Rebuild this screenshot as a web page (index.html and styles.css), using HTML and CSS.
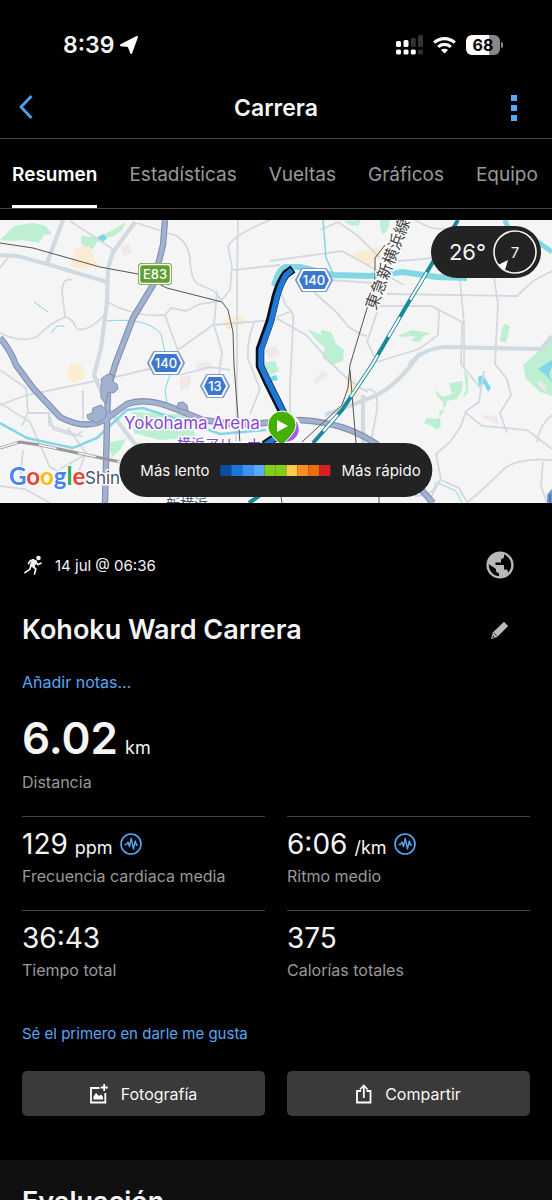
FILE: index.html
```
<!DOCTYPE html>
<html lang="es">
<head>
  <meta charset="UTF-8">
  <meta name="viewport" content="width=device-width, initial-scale=1.0">
  <title>Carrera</title>
  <link rel="stylesheet" href="styles.css">
</head>
<body>
  <!-- Status bar -->
  <div class="status-bar">
    <div class="status-time">
      <span>8:39</span>
      <svg width="18" height="18" viewBox="0 0 18 18"><path d="M17 1 11.200 17 8.500 10 1 9.200Z" fill="#fff" stroke="#fff" stroke-width="2" stroke-linejoin="round"/></svg>
    </div>
    <div class="status-icons">
      <svg width="27" height="20" viewBox="0 0 27 20">
        <g fill="#fff">
          <rect x="0" y="6" width="5" height="6" rx="1.5"/><rect x="7.500" y="5" width="5" height="7" rx="1.5"/>
          <rect x="0" y="14.500" width="5" height="5" rx="1.5"/><rect x="7.500" y="14.500" width="5" height="5" rx="1.5"/><rect x="14.800" y="14.500" width="5" height="5" rx="1.5"/>
        </g>
        <g fill="#333"><rect x="14.800" y="3" width="5" height="9" rx="1.5"/><rect x="22" y="0" width="5" height="12" rx="1.5"/><rect x="22" y="14.500" width="5" height="5" rx="1.5"/></g>
      </svg>
      <svg width="23" height="18" viewBox="0 0 23 18" fill="none" stroke="#fff" stroke-width="3.200">
        <path d="M1.200 6.700a14.800 14.800 0 0 1 20.600 0"/><path d="M5.200 10.900a9 9 0 0 1 12.600 0"/><path d="M11.500 17.600 8 14.100a5 5 0 0 1 7 0Z" fill="#fff" stroke="none"/>
      </svg>
      <div class="battery"><span>68</span></div>
    </div>
  </div>

  <!-- Header -->
  <header class="header">
    <button class="icon-button" aria-label="Atrás">
      <svg width="14" height="25" viewBox="0 0 14 25"><path d="M12.500 1 2 12l10.500 11" fill="none" stroke="#4d9ff0" stroke-width="2.800"/></svg>
    </button>
    <h1>Carrera</h1>
    <button class="icon-button menu-button" aria-label="Más opciones">
      <svg width="6" height="26" viewBox="0 0 6 26" fill="#57a7fb"><path d="M0 0h6v6H0zM0 10h6v6H0zM0 20h6v6H0z"/></svg>
    </button>
  </header>

  <nav class="tabs">
    <a href="#resumen" class="active">Resumen</a>
    <a href="#estadisticas">Estadísticas</a>
    <a href="#vueltas">Vueltas</a>
    <a href="#graficos">Gráficos</a>
    <a href="#equipo">Equipo</a>
  </nav>

  <!-- Map -->
  <section class="map">
    <svg class="map-canvas" viewBox="0 0 552 283">
      <rect width="552" height="283" fill="#f5f5f5"/>
      <!-- parks -->
      <g fill="#bdf0d2">
        <path d="M0 20 14 6l18-3 14 3 6 8-8 1-5 8-17-3-9 1Z"/>
        <path d="M81 16l16 1 12-5 17-10-4 8-8 6-15 4-8 11-10-7Z"/>
        <path d="M343 1l18-1-3 6-8-1ZM380 0h10l-2 9-5 6-3-8Z"/>
        <path d="M307 109l15 6-2-5 11 2 5 12 8 6-1 11-12 4-9-8 3-9-8-7Z"/>
        <path d="M399 115l13-5 18 3-6 3-5 6-8-1 4-5-15 1Z"/>
        <path d="M504 104l6 2-4 17-6-2 2-12Z"/>
        <path d="M523 145l29-26v57l-12-4-14-13Z"/>
        <path d="M435 170l8 7 9-3-3-11 14-2-1 9-5 9-10 2-3 8-5 3 2 13-3 5-8-5-6-2 3-5 11 1 6-8-1-9-6-6Z"/>
        <path d="M464 150l4 6v17l-5 4 3-8Z"/>
        <path d="M132 192l56 3 8 22-36 3-26-7Z"/>
        <path d="M110 222l16-3-6 11-8 7-2-7ZM262 143l13-2 4 10-10 5Z"/>
      </g>
      <g fill="#7fd6e8"><path d="M97 18l6-4 4 4-4 4ZM478 157l5-2 8 13-3 4-4-8-5 2ZM538 149l14-9v6l-3 8 3 8-6-7ZM267 158l9-3 2 5-9 2Z"/></g>
      <!-- built up blocks -->
      <g fill="#fbecd2"><path d="M76 28l14-2 8 20-18 4-10-4ZM70 143l12 2 3 13-12 5-6-8ZM353 34l22-7 10 3-15 15-16-5ZM344 155l13 5 4 14-12 8ZM223 100l18-5 6 7-20 8Z"/></g>
      <g fill="#f0e8e9"><path d="M120 27l9-3 3 9-8 3ZM196 143l14-1 2 7-14 3ZM180 158l12-4-3 14-9 3ZM313 161l10-11 5 5-12 9ZM537 161l8 3 2 9-10-9ZM481 195l16 1 1 8-13-5ZM264 130l12-5 3 10-10 4Z"/></g>
      <!-- minor roads -->
      <g fill="none" stroke="#d3d9e1" stroke-width="1.800">
        <path d="M0 113q24 11 38 3 12-13 27-19 7 1 12 12 12 3 27-14"/>
        <path d="M65 97l-3-26q1-14 10-11M0 48l10-13"/>
        <path d="M70 1l17 11 27 18M107 82q30 16 58 13l6-7 15 3 14-7 21-3 9-11 2-23-4-20q4-12 47-29"/>
        <path d="M137 3l40 13q12 8 13 24 1 20 8 24l16 7 7 9"/>
        <path d="M233 50l47-5M238 0l-1 60 0 80-1 83M217 71l-3 34 8 27-3 23 4 22"/>
        <path d="M178 130l35-25 61-5M165 95l13 36M255 101q-8 17-7 38l12 30-10 25"/>
        <path d="M174 143l-50 12-97 20L0 185M0 150l26 18 2 24-6 14M27 193h22l4 16 22 7 8-5M49 195v10l34 12M83 170l0 29"/>
        <path d="M0 183l30 19 20 45 17 9M68 208l18 25-7 18M180 155l30-8 20 3"/>
        <path d="M270 41l72-10 62 34M320 10l18-8 20 14 34 34M387 42l47-4M415 0q20 12 30 8"/>
        <path d="M276 59l10 27q9 5 7 20l-3 60v40M277 97l15-6M276 98l30 17 32 35q20 18 30 22"/>
        <path d="M314 72l22 20 13 15q13 9 18 9M330 60l45 3M387 74l130 2 16-15 19-10M380 86l51 0 31 16-1 42 20 25"/>
        <path d="M460 59l4 45 0 45M494 57l4 27-3 60 12 15 4 16-11 18 7 20M439 91l-1 24-19 14-42 13-10-20 12-36"/>
        <path d="M495 58l4-20 20-4 20 6"/>
        <path d="M484 151l-5 31-13 9-5 15-11 16-14 12 5 26 18 8 14 25"/>
        <path d="M465 192l17 14 45 4 25 19M537 222q2-16 15-27M552 240q-40-3-52 13l-18 17-15 13M543 242l-2 24 6 17"/>
        <path d="M0 266l25 3 25 14M23 230l-3 30M60 249l25-14M365 170q14-4 12 20l-6 32"/>
        <path d="M415 276q20 0 21-14M440 260l-12 23"/>
      </g>
      <!-- main roads -->
      <g fill="none" stroke="#d2dae1" stroke-width="4.200">
        <path d="M0 35l17 1 30 8 60 18M63 0L47 43"/>
        <path d="M135 2l-22 30-5 16-1 34-6 46-7 27 13 30"/>
        <path d="M409 145q14-17 37-18l95 2 11-13M420 133q-22 32-45 43l-50 19M363 175v48M109 190l26 34 22 4"/>
      </g>
      <!-- water -->
      <g fill="none" stroke="#82d7e5">
        <path d="M274 66q5-18 12-19l14 0 33 8 37 1 33-4 34 5 30 1" stroke-width="6"/>
        <path d="M505 0q5 18 30 20l17 12" stroke-width="5"/>
        <path d="M323 0l3 38 8 17" stroke-width="1.500"/>
        <path d="M0 203l27 15 46 10 24-10 30-28 16-2 37 12 40 14 46-4" stroke-width="2.500"/>
        <path d="M34 82l14 10M51 113l6-7h7M107 101q40-4 54 13l5 23 7 8-8 25 2 14M438 263l18 8 6 12" stroke-width="1"/>
      </g>
      <!-- expressways -->
      <g fill="none" stroke-linejoin="round">
        <g stroke="#8191b0" stroke-width="6.400">
          <path d="M165 0l-2 25-10 40-20 33-18 47-7 24-1 34-2 80"/>
          <path d="M0 118q10 11 16 27l17 23 27 29q28 15 49 0l18-13q19-7 46 4l30 12 35 5 62-5q58 3 93 38l40 45"/>
        </g>
        <g stroke="#a2b1d0" stroke-width="4.200">
          <path d="M165 0l-2 25-10 40-20 33-18 47-7 24-1 34-2 80"/>
          <path d="M0 118q10 11 16 27l17 23 27 29q28 15 49 0l18-13q19-7 46 4l30 12 35 5 62-5q58 3 93 38l40 45"/>
        </g>
        <!-- junctions -->
        <g fill="#a2b1d0" stroke="#8191b0" stroke-width="1">
          <path d="M101 166l1-8 6-4 5 1v7l4 2 1 5-4 4-6-1-2 12-5-6Z"/>
          <path d="M88 199l-1-4 5-2 1-5 8-3 6 6-2 7-8 5Z"/>
          <path d="M177 188l1-5 5-1 4 3 1 6Z"/>
        </g>
      </g>
      <!-- railways -->
      <g fill="none" stroke="#555" stroke-width="1">
        <path d="M0 23l33 5 67 19 38 7 29 14 55 14 6 8 5 22 1 33 6 78M385 25l-10 13v20l-7 27-18 60-2 23-6 17-40 37M350 150l6 73M280 270l2 13M379 277v6"/>
      </g>
      <path d="M0 228l20-6 20 3 80 17" fill="none" stroke="#999" stroke-width="3"/>
      <path d="M0 228l20-6 20 3 80 17" fill="none" stroke="#f5f5f5" stroke-width="1.600" stroke-dasharray="18 22"/>
      <path d="M458 0l-28 47-23 38-35 60-30 45-29 33" fill="none" stroke="#17899a" stroke-width="4"/>
      <path d="M458 0l-28 47-23 38-35 60-30 45-29 33" fill="none" stroke="#fff" stroke-width="2.200" stroke-dasharray="0 61 32 20 23 21 50 22 22 60"/>
      <path d="M249 283l14-10" stroke="#17899a" stroke-width="4"/>
      <!-- run route -->
      <path d="M293 49l-7 5q-6 8-10 22l-6 25-10 28v17l7 15 17 34-8 22-12 8" fill="none" stroke="#06101f" stroke-width="8.500" stroke-linejoin="round"/>
      <path d="M292 50l-6 5q-5 8-9 22l-6 25-10 28v16l7 15 17 34-8 22-12 8" fill="none" stroke="#1d78d8" stroke-width="5.500" stroke-linejoin="round"/>

      <!-- map labels -->
      <text class="map-label rail-label" text-anchor="middle" transform="translate(393 46) rotate(-69)">東急新横浜線</text>
      <text class="map-label place-label" x="124" y="209">Yokohama Arena</text>
      <text class="map-label place-label-jp" x="177" y="229">横浜アリーナ</text>
      <text class="map-label city-label" x="85" y="264">Shin</text>
      <text class="map-label city-label-jp" x="166" y="289">新横浜</text>
      <text class="google-logo" x="9" y="265"><tspan fill="#4285f4">G</tspan><tspan fill="#ea4335">o</tspan><tspan fill="#fbbc05">o</tspan><tspan fill="#4285f4">g</tspan><tspan fill="#34a853">l</tspan><tspan fill="#ea4335">e</tspan></text>

      <!-- road shields -->
      <rect x="138" y="43" width="34" height="22" rx="4" fill="#5f9d35"/>
      <rect x="139.500" y="44.500" width="31" height="19" rx="3" fill="#5f9d35" stroke="#fff" stroke-width="1.500"/>
      <text class="shield-label" x="155" y="59">E83</text>
      <g fill="#3c78cf" stroke-linejoin="round">
        <path d="M302 49h24l6 11-6 11h-24l-6-11Z" stroke="#7d9ccb" stroke-width="2"/>
        <path d="M303 50h22l5 10-5 10h-22l-5-10Z" stroke="#fff" stroke-width="1.800"/>
        <path d="M154 132h24l6 11-6 11h-24l-6-11Z" stroke="#7d9ccb" stroke-width="2"/>
        <path d="M155 133h22l5 10-5 10h-22l-5-10Z" stroke="#fff" stroke-width="1.800"/>
        <path d="M207 155h16l6 11-6 11h-16l-6-11Z" stroke="#7d9ccb" stroke-width="2"/>
        <path d="M208 156h14l5 10-5 10h-14l-5-10Z" stroke="#fff" stroke-width="1.800"/>
        <path d="M548 275l4-5v13h-4Z" stroke="#7d9ccb" stroke-width="2"/>
      </g>
      <text class="shield-label" x="314" y="65">140</text>
      <text class="shield-label" x="166" y="148">140</text>
      <text class="shield-label" x="215" y="171">13</text>

      <!-- start pin -->
      <circle cx="286" cy="209" r="14" fill="#a259ee" stroke="#fff" stroke-width="2.500"/>
      <path d="M282 226q-4-4-9-9-6-6-5-12a14 14 0 0 1 28 0q0 6-6 12-5 5-8 9Z" fill="#45b000" stroke="#fff"/>
      <path d="M277 200v12l11-6Z" fill="#fff"/>
    </svg>

    <div class="weather">
      <span>26°</span>
      <svg width="44" height="44" viewBox="0 0 44 44">
        <circle cx="22" cy="22" r="21" fill="none" stroke="#f2f2f2" stroke-width="1.600"/>
        <path d="M5 35 15 30 12 40Z" fill="#fff"/>
        <text class="wind" x="22" y="28">7</text>
      </svg>
    </div>

    <div class="legend">
      <span>Más lento</span>
      <div class="pace-scale"><i></i><i></i><i></i><i></i><i></i><i></i><i></i><i></i><i></i><i></i></div>
      <span>Más rápido</span>
    </div>
  </section>

  <!-- Activity summary -->
  <main class="summary" id="resumen">
    <div class="meta">
      <svg width="22" height="22" viewBox="0 0 22 22">
        <circle cx="16.500" cy="4" r="2.300" fill="#f2f2f2"/>
        <path d="M11 12.500l2.800 2.500-1.300 5M8.800 12.500 7.500 15.600 3 18.500M11.500 6.200 8.500 6.500 6.500 9.500M14 8l1.800 2.600 3.200-1.400" fill="none" stroke="#f2f2f2" stroke-width="1.700" stroke-linejoin="round" stroke-linecap="round"/>
        <path d="M10.500 5.200 14.800 7 12 13 8 12.200Z" fill="#f2f2f2" stroke="#f2f2f2" stroke-linejoin="round"/>
      </svg>
      <span>14 jul @ 06:36</span>
      <button class="icon-button privacy-button" aria-label="Privacidad">
        <svg width="28" height="28" viewBox="0 0 28 28">
          <circle cx="14" cy="14" r="12.400" fill="#000" stroke="#b9b9b9" stroke-width="2.400"/>
          <path d="M2 12.500 4 7l6-5 8 0v4.500l-3 2v3H9.500V14H18v4.500h3L22.500 22 17 26.500 13 27v-4.500l-3-2V18Z" fill="#b9b9b9"/>
        </svg>
      </button>
    </div>

    <div class="title-row">
      <h2>Kohoku Ward Carrera</h2>
      <button class="icon-button" aria-label="Editar">
        <svg width="18" height="18" viewBox="0 0 18 18"><path d="M0 18 1.800 11.500 13 .8 17.200 5 6.200 16Z" fill="#b9b9b9"/><path d="M2 14.500 3.500 16l-2 .8Z" fill="#000"/><path d="M2.600 11.800 6 15.200" stroke="#333"/></svg>
      </button>
    </div>
    <a href="#notas" class="notes-link">Añadir notas...</a>

    <div class="distance">
      <div class="value"><strong>6.02</strong> <small>km</small></div>
      <div class="label">Distancia</div>
    </div>

    <div class="stats">
      <div class="stat">
        <div class="value">129 <small>ppm</small>
          <svg width="22" height="22" viewBox="0 0 22 22" fill="none" stroke="#58a6f5"><circle cx="11" cy="11" r="10" stroke-width="1.600"/><path d="M4.500 11.500h2L8 9l1.500 4.500L11.200 5.500l2.300 10.500L15.300 8l1.200 4h1.500" stroke-width="1.400" stroke-linejoin="round"/></svg>
        </div>
        <div class="label">Frecuencia cardiaca media</div>
      </div>
      <div class="stat">
        <div class="value">6:06 <small>/km</small>
          <svg width="22" height="22" viewBox="0 0 22 22" fill="none" stroke="#58a6f5"><circle cx="11" cy="11" r="10" stroke-width="1.600"/><path d="M4.500 11.500h2L8 9l1.500 4.500L11.200 5.500l2.300 10.500L15.300 8l1.200 4h1.500" stroke-width="1.400" stroke-linejoin="round"/></svg>
        </div>
        <div class="label">Ritmo medio</div>
      </div>
      <div class="stat">
        <div class="value">36:43</div>
        <div class="label">Tiempo total</div>
      </div>
      <div class="stat">
        <div class="value">375</div>
        <div class="label">Calorías totales</div>
      </div>
    </div>

    <a href="#me-gusta" class="like-link">Sé el primero en darle me gusta</a>

    <div class="actions">
      <button>
        <svg width="18" height="20" viewBox="0 0 18 20"><path d="M9.500 4H1v14.500h14.300V9" fill="none" stroke="#fff" stroke-width="1.800"/><path d="M14.200 0v7M10.700 3.500h7" stroke="#fff" stroke-width="1.800"/><path d="M3.500 15.500v-3L6 9l3 3 2-1.500 2 2.500v2.500Z" fill="#fff"/></svg>
        Fotografía
      </button>
      <button>
        <svg width="16" height="20" viewBox="0 0 16 20" fill="none" stroke="#fff" stroke-width="1.800"><path d="M5 7H1v11.500h13.500V7h-4M7.800 14V2M4 5.500l3.800-4 3.800 4"/></svg>
        Compartir
      </button>
    </div>
  </main>

  <section class="evaluation">
    <h2>Evaluación</h2>
  </section>
</body>
</html>
```
FILE: styles.css
```
/* General */
* {
  box-sizing: border-box;
}

body {
  margin: 0;
  height: 100vh;
  overflow: hidden;
  background: #000;
  color: #f5f5f5;
  font-family: Inter, 'Noto Sans CJK JP', sans-serif;
  font-size: 16px;
}

h1, h2 {
  margin: 0;
  font-weight: 600;
}

a {
  color: #58a6f5;
  text-decoration: none;
}

svg {
  display: block;
  flex: none;
}

.icon-button {
  padding: 0;
  border: none;
  background: none;
  cursor: pointer;
}

/* Status bar */
.status-bar {
  display: flex;
  justify-content: space-between;
  align-items: center;
  height: 77px;
  padding: 13px 52px 0 63px;
}

.status-time,
.status-icons {
  display: flex;
  align-items: center;
}

.status-time {
  gap: 6px;
  font-size: 23px;
  font-weight: 600;
}

.status-icons {
  gap: 10px;
}

.battery {
  position: relative;
  width: 34px;
  height: 20px;
  border-radius: 6px;
  background: linear-gradient(to right, #fff 68%, #888 68%);
  color: #000;
  font-size: 16px;
  font-weight: 700;
  line-height: 20px;
  text-align: center;
}

.battery::after {
  content: '';
  position: absolute;
  top: 7px;
  right: -3px;
  width: 2px;
  height: 6px;
  border-radius: 0 2px 2px 0;
  background: #888;
}

/* Header */
.header {
  display: grid;
  grid-template-columns: 1fr auto 1fr;
  align-items: center;
  height: 62px;
  padding: 0 35px 0 19px;
  border-bottom: 1px solid #444;
}

.header h1 {
  padding-left: 16px;
  font-size: 23px;
}

.menu-button {
  justify-self: end;
}

/* Tabs */
.tabs {
  display: flex;
  gap: 32px;
  height: 70px;
  padding: 0 12px;
  border-bottom: 1px solid #444;
  overflow: hidden;
}

.tabs a {
  display: flex;
  align-items: center;
  padding-top: 4px;
  border-bottom: 3px solid transparent;
  color: #999;
  font-size: 19px;
  white-space: nowrap;
}

.tabs .active {
  border-color: #fff;
  color: #fff;
  font-weight: 600;
}

/* Map */
.map {
  position: relative;
  margin-top: 11px;
}

.map-canvas {
  width: 100%;
  height: auto;
}

.map-label {
  paint-order: stroke;
  stroke: #fff;
  stroke-width: 3px;
  stroke-linejoin: round;
}

.rail-label {
  fill: #444;
  font-size: 16px;
}

.place-label {
  fill: #8a45dc;
  font-size: 17px;
}

.place-label-jp {
  fill: #8a45dc;
  font-size: 14px;
}

.city-label {
  fill: #44546a;
  font-size: 17px;
}

.city-label-jp {
  fill: #44546a;
  font-size: 14px;
}

.google-logo {
  font-family: Lato, sans-serif;
  font-size: 24px;
  font-weight: 700;
  paint-order: stroke;
  stroke: #fff;
  stroke-width: 2px;
}

.shield-label {
  fill: #fff;
  font-size: 13px;
  font-weight: 500;
  text-anchor: middle;
}

.weather,
.legend {
  position: absolute;
  display: flex;
  align-items: center;
  border-radius: 27px;
  background: #232323;
}

.weather {
  top: 6px;
  right: 11px;
  gap: 7px;
  height: 52px;
  padding: 0 4px 0 18px;
  font-size: 22px;
}

.wind {
  fill: #f5f5f5;
  font-size: 15px;
  text-anchor: middle;
}

.legend {
  bottom: 6px;
  left: 50%;
  transform: translateX(-50%);
  gap: 11px;
  height: 54px;
  padding: 0 12px 0 21px;
  font-size: 15px;
  white-space: nowrap;
}

.pace-scale {
  display: grid;
  grid-template-columns: repeat(10, 11px);
  height: 11px;
}

.pace-scale i:nth-child(1) { background: #084ca4; }
.pace-scale i:nth-child(2) { background: #1b76dc; }
.pace-scale i:nth-child(3) { background: #3c92f3; }
.pace-scale i:nth-child(4) { background: #5ba9ff; }
.pace-scale i:nth-child(5),
.pace-scale i:nth-child(6) { background: #82cc1c; }
.pace-scale i:nth-child(7) { background: #fccc4c; }
.pace-scale i:nth-child(8) { background: #fc8c26; }
.pace-scale i:nth-child(9) { background: #ef6b10; }
.pace-scale i:nth-child(10) { background: #d92020; }

/* Activity summary */
.summary {
  display: flex;
  flex-direction: column;
  align-items: stretch;
  padding: 48px 22px 44px;
}

.meta {
  display: flex;
  align-items: center;
  gap: 11px;
  height: 28px;
  font-size: 15px;
}

.privacy-button {
  margin-left: auto;
  margin-right: 16px;
}

.title-row {
  display: flex;
  align-items: center;
  justify-content: space-between;
  margin-top: 33px;
  padding-right: 21px;
}

.title-row h2 {
  font-size: 27px;
  line-height: 36px;
}

.notes-link {
  margin-top: 22px;
  font-size: 16px;
  line-height: 24px;
}

.value {
  display: flex;
  align-items: baseline;
  gap: 7px;
}

.value small {
  font-size: 18px;
}

.label {
  margin-top: 2px;
  color: #999;
  font-size: 16px;
  line-height: 24px;
}

.distance {
  margin-top: 14px;
}

.distance strong {
  font-size: 44px;
  font-weight: 600;
  line-height: 60px;
}

.stats {
  display: grid;
  grid-template-columns: 1fr 1fr;
  column-gap: 22px;
  margin-top: 22px;
}

.stat {
  height: 94px;
  padding-top: 9px;
  border-top: 1px solid #444;
}

.stat .value {
  height: 36px;
  font-size: 28px;
  line-height: 36px;
}

.stat svg {
  align-self: center;
}

.like-link {
  margin-top: 18px;
  font-size: 15px;
  line-height: 24px;
}

.actions {
  display: grid;
  grid-template-columns: 1fr 1fr;
  gap: 22px;
  margin-top: 25px;
}

.actions button {
  display: flex;
  justify-content: center;
  align-items: center;
  gap: 13px;
  height: 45px;
  padding: 0;
  border: none;
  border-radius: 5px;
  background: #3a3a3a;
  color: #f5f5f5;
  font-family: inherit;
  font-size: 16px;
  cursor: pointer;
}

/* Evaluation */
.evaluation {
  padding: 24px 22px;
  background: #101010;
}

.evaluation h2 {
  font-size: 27px;
  line-height: 36px;
}
```
